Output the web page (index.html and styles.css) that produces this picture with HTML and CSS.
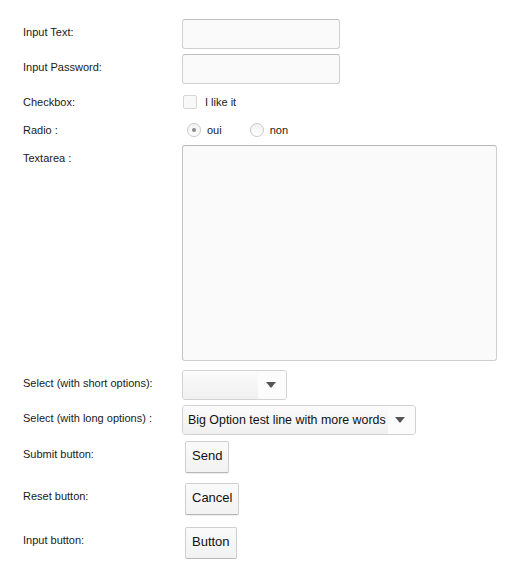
FILE: index.html
```html
<!DOCTYPE html>
<html>
<head>
<meta charset="utf-8">
<link rel="stylesheet" href="styles.css">
</head>
<body>
<form class="form">
  <div class="row r1">
    <label class="lbl">Input Text:</label>
    <input class="field" type="text">
  </div>
  <div class="row r2">
    <label class="lbl">Input Password:</label>
    <input class="field" type="password">
  </div>
  <div class="row r3">
    <label class="lbl lbl-small">Checkbox:</label>
    <div class="choice">
      <span class="check"></span>
      <span class="opt">I like it</span>
    </div>
  </div>
  <div class="row r4">
    <label class="lbl lbl-small">Radio :</label>
    <div class="choice radios">
      <span class="radio on"><span class="dot"></span></span>
      <span class="opt opt-oui">oui</span>
      <span class="radio"></span>
      <span class="opt">non</span>
    </div>
  </div>
  <div class="row r5">
    <label class="lbl">Textarea :</label>
    <textarea class="area"></textarea>
  </div>
  <div class="row r6">
    <label class="lbl">Select (with short options):</label>
    <div class="select short">
      <span class="sel-text"></span>
      <span class="sel-arrow"><span class="tri"></span></span>
    </div>
  </div>
  <div class="row r7">
    <label class="lbl">Select (with long options) :</label>
    <div class="select long">
      <span class="sel-text">Big Option test line with more words</span>
      <span class="sel-arrow"><span class="tri"></span></span>
    </div>
  </div>
  <div class="row r8">
    <label class="lbl">Submit button:</label>
    <button class="btn" type="button">Send</button>
  </div>
  <div class="row r9">
    <label class="lbl">Reset button:</label>
    <button class="btn" type="button">Cancel</button>
  </div>
  <div class="row r10">
    <label class="lbl">Input button:</label>
    <button class="btn" type="button">Button</button>
  </div>
</form>
</body>
</html>
```
FILE: styles.css
```css
html, body {
  margin: 0;
  padding: 0;
  background: #ffffff;
}
body {
  font-family: "Liberation Sans", Arial, sans-serif;
  font-size: 11px;
  color: #1a1a1a;
}
.form {
  padding: 19px 0 0 23px;
}
.row {
  display: grid;
  grid-template-columns: 159px auto;
  align-items: start;
}
.r2 { margin-top: 5px; }
.r3 { margin-top: 11px; }
.r4 { margin-top: 14px; }
.r5 { margin-top: 8px; }
.r6 { margin-top: 9px; }
.r7 { margin-top: 5px; }
.r8 { margin-top: 6px; }
.r9 { margin-top: 10px; }
.r10 { margin-top: 12px; }

.lbl {
  display: block;
  line-height: 14px;
  padding-top: 6px;
  justify-self: start;
}
.lbl-small { padding-top: 0; }

.field {
  box-sizing: border-box;
  width: 158px;
  height: 30px;
  margin: 0;
  border: 1px solid #cfcfcf;
  border-top-color: #bdbdbd;
  border-radius: 3px;
  background: #fafafa;
  padding: 0 6px;
  outline: none;
}
.choice {
  display: flex;
  align-items: center;
  height: 14px;
}
.check {
  box-sizing: border-box;
  width: 14px;
  height: 14px;
  margin-left: 1px;
  border: 1px solid #d6d6d6;
  border-radius: 2px;
  background: #f9f9f9;
}
.opt {
  line-height: 14px;
  margin-left: 8px;
}
.radios { padding-left: 5px; }
.radio {
  box-sizing: border-box;
  width: 14px;
  height: 14px;
  border: 1px solid #c8c8c8;
  border-radius: 50%;
  background: linear-gradient(#f2f2f2, #ffffff);
  display: flex;
  align-items: center;
  justify-content: center;
}
.dot {
  width: 4px;
  height: 4px;
  border-radius: 50%;
  background: #8a8a8a;
}
.radios .opt { margin-left: 6px; }
.radios .opt-oui { margin-right: 28px; }

.area {
  box-sizing: border-box;
  display: block;
  width: 315px;
  height: 216px;
  margin: 0;
  border: 1px solid #cfcfcf;
  border-top-color: #b8b8b8;
  border-left-color: #c4c4c4;
  border-radius: 3px;
  background: #fafafa;
  resize: none;
  outline: none;
}

.select {
  box-sizing: border-box;
  display: flex;
  height: 30px;
  border: 1px solid #d2d2d2;
  border-radius: 3px;
  overflow: hidden;
  justify-self: start;
}
.select.short { width: 105px; }
.sel-text {
  flex: 1;
  display: flex;
  align-items: center;
  padding-left: 5px;
  font-size: 12.4px;
  color: #111111;
  white-space: nowrap;
  background: linear-gradient(#fbfbfb, #f0f0f0);
}
.long .sel-text { flex: none; padding-right: 2px; }
.sel-arrow {
  width: 28px;
  display: flex;
  align-items: center;
  justify-content: center;
  background: #fcfcfc;
}
.long .sel-arrow { width: 27px; }
.tri {
  width: 0;
  height: 0;
  border-left: 5px solid transparent;
  border-right: 5px solid transparent;
  border-top: 6px solid #555555;
  margin-right: 2px;
}

.btn {
  justify-self: start;
  margin: 0 0 0 3px;
  height: 32px;
  padding: 0 6px 3px;
  font-family: "Liberation Sans", Arial, sans-serif;
  font-size: 13px;
  color: #111111;
  background: linear-gradient(#fafafa, #f2f2f2);
  border: 1px solid #d0d0d0;
  border-bottom-color: #b8b8b8;
  border-radius: 2px;
  box-shadow: 0 1px 1px rgba(0,0,0,0.08);
}
```
